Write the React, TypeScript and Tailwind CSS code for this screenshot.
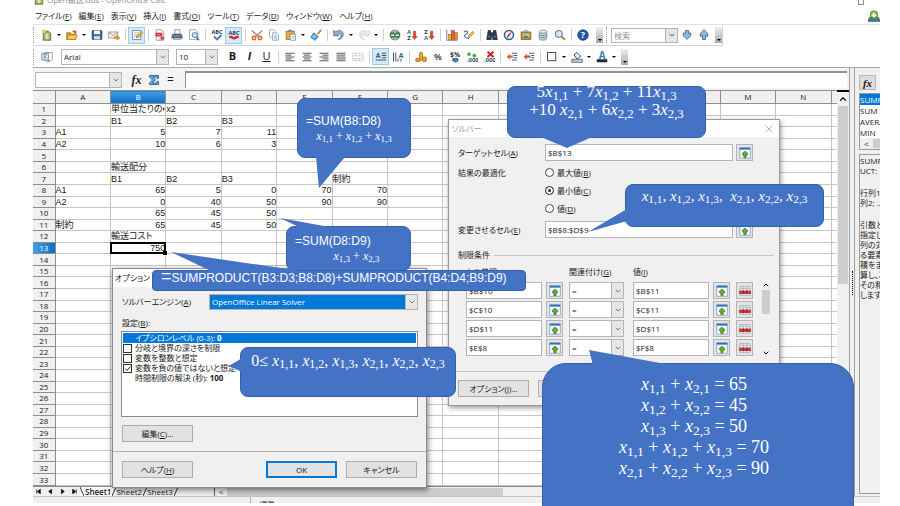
import { useState } from "react";
import type { ReactNode } from "react";
import { ChevronDown, ChevronUp, X } from "lucide-react";
import clsx from "clsx";

const icons: Record<string, ReactNode> = {
  new: (
    <>
      <path d="M3 3h7l3 3v9H3z" fill="#8fae5a" stroke="#4c6a2e" />
      <path d="M5 7h6M5 9.500h6M5 12h6M8 6v8" stroke="#fff" />
      <circle cx="4" cy="3" r="2.500" fill="#e9c93c" />
    </>
  ),
  open: (
    <>
      <path d="M1 5h5l1 2h6v7H1z" fill="#e8a32a" stroke="#a36410" />
      <path d="M4 8h11l-3 6H1z" fill="#fbcf5a" stroke="#b87716" />
      <path d="M8 4c2-3 4-3 5-1l1-1v4h-4l1-1c-1-1-2-1-3-1z" fill="#d85a1a" />
    </>
  ),
  save: (
    <>
      <rect x="1.500" y="2" width="13" height="12" rx="1" fill="#3f6796" stroke="#233f63" />
      <rect x="4" y="2" width="8" height="5" fill="#f3f6fa" />
      <rect x="4" y="9.500" width="8" height="4.500" fill="#cfdae8" />
    </>
  ),
  mail: (
    <>
      <rect x="1" y="4" width="12" height="8" fill="#f4f1e8" stroke="#8d8776" />
      <path d="M1 4l6 5 6-5" fill="none" stroke="#8d8776" />
      <path d="M9 10h3V8l4 4-4 3v-2H9z" fill="#f0a02b" stroke="#b26c0c" strokeWidth=".6" />
    </>
  ),
  edit: (
    <>
      <path d="M2 2h11v12H2z" fill="#fff" stroke="#56789c" />
      <path d="M4 5h7M4 7.500h5M4 10h4" stroke="#9cb3ca" />
      <path d="M7 12l1-3 6-6 2 2-6 6z" fill="#f5b92e" stroke="#7a5516" strokeWidth=".7" />
    </>
  ),
  pdf: (
    <>
      <path d="M3 1h7l3 3v11H3z" fill="#fff" stroke="#888" />
      <rect x="2" y="5" width="9" height="5" fill="#cf2f35" />
      <path d="M5 12h7M5 14h5M4 7.500h5" stroke="#f0b5b5" />
      <circle cx="11" cy="12" r="2.500" fill="#d9474c" />
    </>
  ),
  print: (
    <>
      <path d="M5 1h7v6H5z" fill="#fff" stroke="#6e7e90" />
      <path d="M2 7h12l1 5H1z" fill="#6d7f92" stroke="#384858" />
      <path d="M3 12h10v2H3z" fill="#d9e0e6" stroke="#4d5c6b" strokeWidth=".6" />
    </>
  ),
  preview: (
    <>
      <path d="M2 1h8l3 3v10H2z" fill="#fff" stroke="#8593a1" />
      <circle cx="9" cy="8" r="3.500" fill="#cfe3f3" stroke="#42617f" />
      <path d="M11.500 11l3 4" stroke="#42617f" strokeWidth="1.800" />
    </>
  ),
  spell: (
    <>
      <text x="8" y="7" fontSize="7.500" fontWeight="700" textAnchor="middle" fill="#27415e">ABC</text>
      <path d="M4 10l4 4 6-6" fill="none" stroke="#4b7fb8" strokeWidth="2.500" />
    </>
  ),
  autospell: (
    <>
      <text x="8" y="8" fontSize="7.500" fontWeight="700" textAnchor="middle" fill="#27415e">ABC</text>
      <path d="M2 11.500q2-2 4 0q2 2 4 0t4 0" fill="none" stroke="#d22" strokeWidth="3" />
    </>
  ),
  cut: (
    <>
      <path d="M1 2l10 9M15 2L5 11" stroke="#9a8f86" strokeWidth="2" />
      <circle cx="4" cy="12" r="2.300" fill="none" stroke="#d8651d" strokeWidth="2" />
      <circle cx="12" cy="12" r="2.300" fill="none" stroke="#d8651d" strokeWidth="2" />
    </>
  ),
  copy: (
    <>
      <path d="M2 1h6l2 2v8H2z" fill="#fff" stroke="#8a9db0" />
      <path d="M6 5h6l2 2v8H6z" fill="#eaf1f7" stroke="#8a9db0" />
      <path d="M8 9h4M8 11h4M8 13h4" stroke="#9bb2c8" />
    </>
  ),
  paste: (
    <>
      <rect x="1.500" y="3" width="11" height="11" fill="#e8a93a" stroke="#9b6613" />
      <rect x="4.500" y="1" width="5" height="3" fill="#888" />
      <path d="M7 7h7v8H7z" fill="#fff" stroke="#748fa8" />
      <path d="M9 10h4M9 12h4" stroke="#9bb2c8" />
    </>
  ),
  brush: (
    <>
      <path d="M10 6l4-5 1 1-4 5z" fill="#e9a53a" stroke="#9b6613" />
      <path d="M5 5l6 5-4 5-6-4z" fill="#62a5db" stroke="#2a5f93" />
      <path d="M3 9l3 3M5 8l3 3" stroke="#d8ecfa" />
    </>
  ),
  undo: (
    <path d="M1 2v7h7L6 7c4-2 6 0 4 4l-3 3c8-1 9-11 2-12-3 0-4 1-6 2z" fill="#8fb5dc" stroke="#365d87" />
  ),
  redo: (
    <path d="M15 2v7H8l2-2C6 5 4 7 6 11l3 3C1 13 0 3 7 2c3 0 4 1 6 2z" fill="#e9e9e9" stroke="#cccccc" />
  ),
  globe: (
    <>
      <circle cx="8" cy="8" r="6.500" fill="#5d9a48" stroke="#2b5a3a" />
      <path d="M4 4c3-2 5-2 8 0M4 12c3 2 5 2 8 0M8 1v5M8 11v4" fill="none" stroke="#c9e2c2" />
      <rect x="2" y="6.500" width="6" height="3.500" rx="1.700" fill="#dbe6ee" stroke="#24436c" />
      <rect x="8" y="6.500" width="6" height="3.500" rx="1.700" fill="#dbe6ee" stroke="#24436c" />
    </>
  ),
  sortAz: (
    <>
      <text x="4" y="7" fontSize="8" fontWeight="700" textAnchor="middle" fill="#2c62a8">A</text>
      <text x="4" y="15" fontSize="8" fontWeight="700" textAnchor="middle" fill="#333">Z</text>
      <path d="M10 3h3v7h2l-3.500 4L8 10h2z" fill="#d9482b" stroke="#96290f" strokeWidth=".6" />
    </>
  ),
  sortZa: (
    <>
      <text x="4" y="7" fontSize="8" fontWeight="700" textAnchor="middle" fill="#333">Z</text>
      <text x="4" y="15" fontSize="8" fontWeight="700" textAnchor="middle" fill="#2c62a8">A</text>
      <path d="M10 3h3v7h2l-3.500 4L8 10h2z" fill="#d9482b" stroke="#96290f" strokeWidth=".6" />
    </>
  ),
  chart: (
    <>
      <path d="M1 1v14h14" fill="none" stroke="#555" />
      <rect x="3" y="7" width="4" height="7" fill="#efb02c" stroke="#8a5a14" strokeWidth=".6" />
      <rect x="7" y="2" width="4" height="12" fill="#e2632a" stroke="#96290f" strokeWidth=".6" />
      <rect x="11" y="5" width="4" height="9" fill="#e88a2a" stroke="#96290f" strokeWidth=".6" />
    </>
  ),
  draw: (
    <>
      <path d="M1 4c5-3 7 1 3 3s-2 5 4 6" fill="none" stroke="#3975bd" strokeWidth="1.500" />
      <path d="M6 12l1-3 6-6 2 2-6 6z" fill="#f3b93b" stroke="#a86616" strokeWidth=".7" />
    </>
  ),
  find: (
    <>
      <path d="M3 2h3v3h4V2h3l2 12H9v-4H7v4H1z" fill="#2f3e4e" stroke="#1a2530" />
      <path d="M3 10h2M11 10h2" stroke="#a2b6c8" />
    </>
  ),
  compass: (
    <>
      <circle cx="8" cy="8" r="6" fill="#eef4fb" stroke="#39588b" strokeWidth="2" />
      <path d="M12 3L9 9 7 7z" fill="#d8342a" />
      <path d="M4 13l3-6 2 2z" fill="#39588b" />
    </>
  ),
  gallery: (
    <>
      <path d="M5 4l3-3 3 3" fill="none" stroke="#7a5a22" />
      <rect x="1.500" y="4" width="13" height="10" fill="#cf8f30" stroke="#8a5a14" />
      <rect x="4" y="6" width="8" height="6" fill="#9fc8e8" />
      <path d="M4 12l3-4 2 2 1-1 2 3z" fill="#4d8b3a" />
    </>
  ),
  database: (
    <>
      <path d="M3 3v10c0 2.500 10 2.500 10 0V3" fill="#c3cdd6" stroke="#6f7e8c" />
      <ellipse cx="8" cy="3.500" rx="5" ry="2" fill="#edf1f4" stroke="#6f7e8c" />
      <path d="M3 7c0 2 10 2 10 0M3 10c0 2 10 2 10 0" fill="none" stroke="#6f7e8c" />
    </>
  ),
  zoom: (
    <>
      <path d="M9.500 9.500l5 5" stroke="#c27a27" strokeWidth="2.500" />
      <circle cx="6.500" cy="6.500" r="4.500" fill="#d4e8f7" stroke="#6685a3" strokeWidth="1.500" />
    </>
  ),
  help: (
    <>
      <circle cx="8" cy="8" r="7" fill="#2457a7" stroke="#12356f" />
      <text x="8" y="12.500" fontSize="12" fontWeight="700" textAnchor="middle" fill="#fff">?</text>
    </>
  ),
  down: <path d="M6 2h4v4l3-1v4l-5 5-5-5V5l3 1z" fill="#8db9de" stroke="#2d577f" />,
  up: <path d="M6 14h4V9l3 1V6L8 1 3 6v4l3-1z" fill="#8db9de" stroke="#2d577f" />,
  update: (
    <>
      <path d="M2 10l-2 5h16l-2-5z" fill="#3c8a8a" stroke="#245" />
      <circle cx="8" cy="6" r="5" fill="#7fbf2f" stroke="#4d8417" />
      <path d="M8 3v5M5 6l3 3 3-3" fill="none" stroke="#fff" strokeWidth="1.800" />
    </>
  ),
  styles: (
    <>
      <path d="M5 2h10v9l-2 2H5z" fill="#fff" stroke="#7e8c9b" />
      <rect x="1" y="3" width="9" height="9" fill="#dbe5ef" stroke="#6c7e91" />
      <path d="M3 5h5M3 10l2-3 2 3M12 13l-4 2" fill="none" stroke="#4b6987" />
    </>
  ),
  left: <path d="M2 3h12M2 5.500h8M2 8h12M2 10.500h8M2 13h12" stroke="#555" strokeWidth="1.300" />,
  center: <path d="M2 3h12M4 5.500h8M2 8h12M4 10.500h8M2 13h12" stroke="#555" strokeWidth="1.300" />,
  right: <path d="M2 3h12M6 5.500h8M2 8h12M6 10.500h8M2 13h12" stroke="#555" strokeWidth="1.300" />,
  justify: <path d="M2 3h12M2 5.500h12M2 8h12M2 10.500h12M2 13h12" stroke="#555" strokeWidth="1.300" />,
  merge: <path d="M1 3h14v10H1zM1 6.500h14M1 10h14M5 3v3.500M10 3v3.500M5 10v3M10 10v3" fill="none" stroke="#c8c8c8" />,
  textLr: (
    <>
      <text x="4" y="9" fontSize="9" fontWeight="700" textAnchor="middle" fill="#2d5f7f">A</text>
      <path d="M9 3h6M9 6h6M9 9h6M1 12h14" stroke="#2f4356" strokeWidth="1.200" />
    </>
  ),
  textTb: (
    <>
      <path d="M2 2v12M5 2v12M8 10v4M12 10v4" stroke="#2f4356" strokeWidth="1.200" />
      <text x="12" y="9" fontSize="9" fontWeight="700" textAnchor="middle" fill="#2d5f7f">A</text>
    </>
  ),
  currency: (
    <>
      <rect x="6" y="2" width="4" height="10" rx="1" fill="#edae34" stroke="#a2690f" />
      <rect x="1" y="10" width="6" height="4" rx="1" fill="#e9a02f" stroke="#a2690f" />
      <rect x="10" y="8" width="5" height="6" rx="1" fill="#e9a02f" stroke="#a2690f" />
    </>
  ),
  percent: <text x="8" y="12" fontSize="12" fontWeight="600" textAnchor="middle" fill="#26323e">%</text>,
  standard: (
    <>
      <text x="8" y="8" fontSize="9" fontWeight="700" textAnchor="middle" fill="#26323e">$%</text>
      <path d="M5 10h7v3l-3 2-4-2z" fill="#4b7fb8" stroke="#28527c" />
    </>
  ),
  addDecimal: (
    <>
      <circle cx="4" cy="4" r="2.500" fill="#58a833" />
      <circle cx="11" cy="6" r="2.500" fill="#58a833" />
      <text x="9" y="15" fontSize="8" fontWeight="700" textAnchor="middle" fill="#28527c">.000</text>
    </>
  ),
  delDecimal: (
    <>
      <path d="M6 1l8 7M14 1L6 8" stroke="#c9281d" strokeWidth="2.800" />
      <text x="9" y="15" fontSize="8" fontWeight="700" textAnchor="middle" fill="#28527c">.000</text>
    </>
  ),
  outdent: (
    <>
      <path d="M8 3h7M10 6h5M10 9h5M8 12h7" stroke="#3e6081" strokeWidth="1.300" />
      <path d="M1 7.500l4-4v2.500h4v3H5v2.500z" fill="#e0592b" />
    </>
  ),
  indent: (
    <>
      <path d="M8 3h7M11 6h4M11 9h4M8 12h7" stroke="#3e6081" strokeWidth="1.300" />
      <path d="M1 7.500l4-4v2.500h5v3H5v2.500z" fill="#d4532a" />
    </>
  ),
  border: <rect x="2" y="2" width="11" height="11" fill="#fff" stroke="#3f4b57" strokeWidth="1.300" />,
  fill: (
    <>
      <path d="M1 11h14v4H1z" fill="#c3cdd6" stroke="#38556f" />
      <path d="M4 5l4-3 5 5-5 4z" fill="#e8eef3" stroke="#38556f" strokeWidth="1.300" />
    </>
  ),
  fontColor: (
    <>
      <path d="M1 11h14v4H1z" fill="#1f2a35" />
      <text x="8" y="11" fontSize="13" fontWeight="700" textAnchor="middle" fill="#3f79b0">A</text>
    </>
  ),
  sigma: <path d="M2 2h12v4h-2l-1-2H7l3 4-4 4h5l1-2h2v4H2v-2l4-4-4-4z" fill="#6aa7d8" stroke="#1d4f80" />,
  shrink: (
    <>
      <rect x="1" y="1" width="14" height="14" fill="#f6fafd" stroke="#7a9cc0" />
      <path d="M1 1h14v2.500H1z" fill="#2f6fbd" />
      <path d="M8 5.500l4 3.500-1.500 2H9.500v3h-3v-3h-1L4 9z" fill="#67ac32" stroke="#3b7515" />
    </>
  ),
  removeRow: (
    <>
      <path d="M1 2h14v12H1zM1 4.500h14M5.500 2v12M10.500 2v12" fill="#e6ebf0" stroke="#a5b1bd" />
      <path d="M0 7.500h16v4.500H0z" fill="#c8383c" />
      <path d="M5.500 7v5M10.500 7v5" stroke="#8c1216" />
    </>
  ),
};

const Icon = ({ name }: { name: string }) => (
  <svg viewBox="0 0 16 16" fill="none" className="size-3 shrink-0">
    {icons[name]}
  </svg>
);

// "|" is a separator, "v" a drop-down arrow, "*" marks a pressed button
const standardBar = [
  "new", "v", "open", "v", "save", "mail", "|", "*edit", "|", "pdf", "print", "preview", "|",
  "spell", "*autospell", "|", "cut", "copy", "paste", "v", "brush", "|", "undo", "v", "redo", "v", "|",
  "globe", "sortAz", "sortZa", "|", "chart", "draw", "|", "find", "compass", "gallery", "database", "zoom", "|", "help",
];
const formatBar = [
  "|", "left", "center", "right", "justify", "merge", "|", "*textLr", "textTb", "|",
  "currency", "percent", "standard", "addDecimal", "delDecimal", "|", "outdent", "indent", "|",
  "border", "v", "fill", "v", "fontColor", "v",
];

const ToolItems = ({ items }: { items: string[] }) => (
  <>
    {items.map((item, i) => {
      if (item === "|") {
        return (
          <span key={i} className="w-[6px] shrink-0 flex justify-center">
            <span className="w-px h-3 bg-[#cfcfcf]" />
          </span>
        );
      }
      if (item === "v") {
        return (
          <button key={i} type="button" aria-label="メニュー" className="w-2 shrink-0 flex justify-center">
            <span className="border-x-2 border-x-transparent border-t-2 border-t-black" />
          </button>
        );
      }
      const pressed = item.startsWith("*");
      const name = item.replace("*", "");
      return (
        <button
          key={i}
          type="button"
          aria-label={name}
          className={clsx(
            "w-[17px] h-[17px] shrink-0 flex items-center justify-center",
            pressed && "bg-[#d5e9f9] border border-[#9fcbee]",
          )}
        >
          <Icon name={name} />
        </button>
      );
    })}
  </>
);

const Handle = () => <span className="w-[5px] h-4 shrink-0 border-l border-dotted border-[#999]" />;

const Overflow = () => (
  <button
    type="button"
    aria-label="その他"
    className="w-[7px] h-4 shrink-0 flex items-end justify-center pb-[2px] bg-gradient-to-b from-[#f0f0f0] to-[#a8a8a8]"
  >
    <span className="border-x-2 border-x-transparent border-t-2 border-t-black" />
  </button>
);

const Select = ({ label, value, className, blue }: { label: string; value: string; className?: string; blue?: boolean }) => (
  <div className={clsx("relative flex border border-[#b4b4b4] bg-white", className)}>
    <select
      aria-label={label}
      className={clsx("appearance-none w-full pl-[2px] outline-none", blue ? "bg-[#0078d7] text-white" : "bg-white")}
    >
      <option>{value}</option>
    </select>
    <span className="absolute right-0 inset-y-0 w-3 flex items-center justify-center bg-[#e6e6e6] border-l border-[#b4b4b4] pointer-events-none">
      <ChevronDown className="size-2 text-[#444]" />
    </span>
  </div>
);

// "ファイル(F)" with the access key underlined
const Label = ({ text }: { text: string }) => {
  const [before, key, after] = text.split(/\(([A-Z])\)/);
  return (
    <span>
      {before}
      {key && <>(<u>{key}</u>)</>}
      {after}
    </span>
  );
};

const PushButton = ({ text, primary, onClick }: { text: string; primary?: boolean; onClick?: () => void }) => (
  <button
    type="button"
    onClick={onClick}
    className={clsx(
      "w-[71px] h-[17px] shrink-0 bg-[#e2e2e2] flex items-center justify-center whitespace-nowrap border",
      primary ? "border-[#0078d7] ring-1 ring-inset ring-[#0078d7]" : "border-[#adadad]",
    )}
  >
    <Label text={text} />
  </button>
);

const IconButton = ({ name, label }: { name: string; label: string }) => (
  <button
    type="button"
    aria-label={label}
    className="w-[17px] h-[17px] shrink-0 flex items-center justify-center bg-[#e4e4e4] border border-[#b4b4b4]"
  >
    <Icon name={name} />
  </button>
);

const columns = "ABCDEFGHIJKLMN".split("");
const sheet: Record<number, Record<string, string | number>> = {
  1: { B: "単位当たりの", C: "x2" },
  2: { B: "B1", C: "B2", D: "B3" },
  3: { A: "A1", B: 5, C: 7, D: 11 },
  4: { A: "A2", B: 10, C: 6, D: 3 },
  6: { B: "輸送配分" },
  7: { B: "B1", C: "B2", D: "B3", F: "制約" },
  8: { A: "A1", B: 65, C: 5, D: 0, E: 70, F: 70 },
  9: { A: "A2", B: 0, C: 40, D: 50, E: 90, F: 90 },
  10: { B: 65, C: 45, D: 50 },
  11: { A: "制約", B: 65, C: 45, D: 50 },
  12: { B: "輸送コスト" },
  13: { B: 750 },
};

const Sheet = () => (
  <table className="w-full h-full table-fixed border-collapse text-[9px] leading-[10px]">
    <colgroup>
      <col className="w-[22px]" />
      {columns.map((c) => (
        <col key={c} />
      ))}
      <col className="w-[6px]" />
    </colgroup>
    <thead>
      <tr className="h-[13px] text-[8px] font-['Open_Sans',sans-serif]">
        <th className="border border-[#8e8e8e] border-l-0 bg-[#f0f0f0] p-0" />
        {columns.map((c) => (
          <th
            key={c}
            className={clsx(
              "border border-[#8e8e8e] p-0 font-normal",
              c === "B" ? "bg-gradient-to-b from-[#3d9fe8] to-[#0b6fc4] text-white" : "bg-[#f0f0f0]",
            )}
          >
            {c}
          </th>
        ))}
        <th className="border border-r-0 border-[#8e8e8e] bg-[#f0f0f0] p-0" />
      </tr>
    </thead>
    <tbody>
      {Array.from({ length: 33 }, (_, i) => i + 1).map((row) => (
        <tr key={row}>
          <th
            className={clsx(
              "border border-l-0 border-[#8e8e8e] p-0 text-[8px] font-normal font-['Open_Sans',sans-serif]",
              row === 13 ? "bg-gradient-to-r from-[#3d9fe8] to-[#0b6fc4] text-white" : "bg-[#f0f0f0]",
            )}
          >
            {row}
          </th>
          {columns.map((c) => {
            const value = sheet[row]?.[c];
            const active = row === 13 && c === "B";
            return (
              <td
                key={c}
                className={clsx(
                  "relative border border-[#c6c6c6] p-0 whitespace-nowrap",
                  typeof value === "number" ? "text-right" : "text-left",
                )}
              >
                {value}
                {row === 1 && c === "B" && (
                  <span className="absolute right-0 top-[3px] border-y-2 border-y-transparent border-l-2 border-l-[#b02020]" />
                )}
                {active && (
                  <span className="absolute -inset-px border-2 border-black">
                    <span className="absolute -right-[3px] -bottom-[3px] size-1 bg-black" />
                  </span>
                )}
              </td>
            );
          })}
          <td className="border border-r-0 border-[#c6c6c6] p-0" />
        </tr>
      ))}
    </tbody>
  </table>
);

const menus = ["ファイル(F)", "編集(E)", "表示(V)", "挿入(I)", "書式(O)", "ツール(T)", "データ(D)", "ウィンドウ(W)", "ヘルプ(H)"];

const FunctionPanel = () => (
  <aside className="w-[26px] shrink-0 bg-[#f0f0f0] border-l border-[#a0a0a0] pl-1 pt-[7px] flex flex-col overflow-hidden whitespace-nowrap">
    <button type="button" aria-label="関数" className="w-[17px] h-[15px] bg-[#dcdcdc] border border-[#b8b8b8] font-['Liberation_Serif',serif] italic font-bold text-[11px] leading-[12px]">
      fx
    </button>
    <ul className="mt-[3px] bg-white border border-r-0 border-[#999] leading-[11px]">
      <li className="bg-[#0078d7] text-white">SUMPRODUCT</li>
      <li>SUM</li>
      <li>AVERAGE</li>
      <li>MIN</li>
      <li className="flex items-center gap-1 bg-[#f0f0f0] pl-1">
        &lt; <span className="w-3 h-[9px] bg-[#cdcdcd]" />
      </li>
    </ul>
    <div className="mt-1 mb-[2px] grow border border-r-0 border-[#999] leading-[10px] flex flex-col gap-3 pt-px">
      <p>SUMPROD<br />UCT:</p>
      <p>行列1;行<br />列2; ...</p>
      <p>引数として<br />指定した配<br />列の対応す<br />る要素間の<br />積をまず計<br />算し、次に<br />その和を返<br />します。</p>
    </div>
  </aside>
);

const constraints = [
  ["$B$10", "$B$11"],
  ["$C$10", "$C$11"],
  ["$D$11", "$D$11"],
  ["$E$8", "$F$8"],
];

const SolverDialog = () => {
  const [goal, setGoal] = useState("最小値(C)");
  return (
    <section className="absolute left-[448px] top-[119px] w-[332px] bg-[#f0f0f0] border border-[#9a9a9a] shadow-[1px_2px_5px_rgba(0,0,0,0.4)]">
      <header className="h-[17px] bg-white text-[#9a9a9a] pl-[3px] pr-[4px] flex items-center justify-between">
        ソルバー
        <button type="button" aria-label="閉じる">
          <X className="size-3" strokeWidth={1.5} />
        </button>
      </header>
      <div className="px-[9px] pt-[7px]">
        <div className="grid grid-cols-[87px_188px_20px] gap-y-[6px] items-center">
          <label htmlFor="target"><Label text="ターゲットセル(A)" /></label>
          <input id="target" defaultValue="$B$13" className="h-[17px] min-w-0 bg-white border border-[#b4b4b4] px-[2px]" />
          <div className="pl-[3px]"><IconButton name="shrink" label="縮小" /></div>
          <span className="self-start leading-[11px]">結果の最適化</span>
          <fieldset className="col-span-2 flex flex-col gap-[7px] pb-px">
            {["最大値(B)", "最小値(C)", "値(D)"].map((g) => (
              <label key={g} className="flex items-center gap-[3px] h-[11px]">
                <input
                  type="radio"
                  name="goal"
                  checked={goal === g}
                  onChange={() => setGoal(g)}
                  className="appearance-none size-[9px] rounded-full border border-[#444] bg-white checked:bg-[#222] checked:ring-2 checked:ring-inset checked:ring-white"
                />
                <Label text={g} />
              </label>
            ))}
          </fieldset>
          <label htmlFor="cells"><Label text="変更させるセル(E)" /></label>
          <input id="cells" defaultValue="$B$8:$D$9" className="h-[17px] min-w-0 bg-white border border-[#b4b4b4] px-[2px]" />
          <div className="pl-[3px]"><IconButton name="shrink" label="縮小" /></div>
        </div>
        <div className="mt-[11px] -mr-1 flex items-center gap-1 leading-[12px]">
          制限条件
          <span className="h-px grow bg-[#c4c4c4]" />
        </div>
        <div className="mt-[5px] pl-2 flex gap-[9px]">
          <table className="border-separate border-spacing-0 leading-[12px]">
            <thead>
              <tr className="h-[15px] align-top">
                <th className="p-0 text-left font-normal"><Label text="セル参照(C)" /></th>
                <th />
                <th className="p-0 text-left font-normal"><Label text="関連付け(G)" /></th>
                <th className="p-0 text-left font-normal"><Label text="値(I)" /></th>
                <th />
                <th />
              </tr>
            </thead>
            <tbody>
              {constraints.map(([ref, value]) => (
                <tr key={ref} className="h-[19px]">
                  <td className="p-0 pr-1">
                    <input aria-label="セル参照" defaultValue={ref} className="block w-[76px] h-[17px] bg-white border border-[#b4b4b4] px-[2px]" />
                  </td>
                  <td className="p-0 pr-[6px]"><IconButton name="shrink" label="縮小" /></td>
                  <td className="p-0 pr-[9px]"><Select label="関連付け" value="=" className="w-[55px] h-[17px]" /></td>
                  <td className="p-0 pr-1">
                    <input aria-label="値" defaultValue={value} className="block w-[76px] h-[17px] bg-white border border-[#b4b4b4] px-[2px]" />
                  </td>
                  <td className="p-0 pr-[6px]"><IconButton name="shrink" label="縮小" /></td>
                  <td className="p-0"><IconButton name="removeRow" label="削除" /></td>
                </tr>
              ))}
            </tbody>
          </table>
          <div className="w-[10px] mt-[14px] flex flex-col items-center text-black">
            <ChevronUp className="size-2 my-[1px]" strokeWidth={3} />
            <span className="w-full h-6 bg-[#cdcdcd]" />
            <ChevronDown className="size-2 mt-auto" strokeWidth={3} />
          </div>
        </div>
      </div>
      <footer className="mt-[14px] border-t border-[#c4c4c4] px-[9px] pt-2 pb-2 flex gap-[9px]">
        <PushButton text="オプション(J)..." />
        <PushButton text="ヘルプ(H)" />
      </footer>
    </section>
  );
};

const options = [
  { text: "分岐と境界の深さを制限", on: false },
  { text: "変数を整数と想定", on: false },
  { text: "変数を負の値ではないと想定", on: true },
];

const OptionsDialog = () => (
  <section className="absolute left-[112px] top-[268px] w-[315px] bg-[#f0f0f0] border border-[#8a8a8a] shadow-[1px_2px_6px_rgba(0,0,0,0.5)]">
    <header className="h-[18px] bg-white pl-[2px] flex items-center">オプション</header>
    <div className="px-[8px] pt-[7px]">
      <div className="flex items-center justify-between pl-px">
        <Label text="ソルバーエンジン(A)" />
        <Select label="ソルバーエンジン" value="OpenOffice Linear Solver" className="w-[209px] h-4" blue />
      </div>
      <p className="mt-[7px] pl-px leading-[12px]"><Label text="設定(B):" /></p>
      <div className="mt-[2px] h-[86px] bg-white border border-[#8a8a8a] leading-[10px] p-px">
        <p className="bg-[#0078d7] text-white pl-3">イプシロンレベル (0-3): <b>0</b></p>
        {options.map((o) => (
          <label key={o.text} className="flex items-center gap-[3px]">
            <span className="relative flex">
              <input
                type="checkbox"
                defaultChecked={o.on}
                className="peer appearance-none size-[9px] border border-[#333] bg-white"
              />
              <svg viewBox="0 0 9 9" className="absolute inset-0 size-[9px] hidden peer-checked:block pointer-events-none">
                <path d="M2 4.500l2 2L7.500 2.500" fill="none" stroke="#222" />
              </svg>
            </span>
            {o.text}
          </label>
        ))}
        <p className="pl-3">時間制限の解決 (秒): <b>100</b></p>
      </div>
      <div className="mt-2 pl-px"><PushButton text="編集(C)..." /></div>
    </div>
    <footer className="mt-[9px] border-t border-[#b0b0b0] px-[9px] py-[9px] flex items-center gap-[9px]">
      <PushButton text="ヘルプ(H)" />
      <span className="grow" />
      <PushButton text="OK" primary />
      <PushButton text="キャンセル" />
    </footer>
  </section>
);

// every "x1,2" becomes an italic x with its subscript
const Formula = ({ text }: { text: string }) => (
  <p className="font-['Liberation_Serif',serif] whitespace-pre">
    {text.split(/x(\d,\d)/).map((part, i) =>
      i % 2 ? (
        <span key={i}>
          <i>x</i>
          <sub className="text-[0.75em] bottom-[-0.2em]">{part}</sub>
        </span>
      ) : (
        part
      ),
    )}
  </p>
);

const Callout = ({ className, tail, children }: { className: string; tail: string; children: ReactNode }) => (
  <div className={clsx("absolute bg-[#4472c4] border border-[#3560ac] text-white", className)}>
    <svg className="absolute left-0 top-0 size-px overflow-visible">
      <path d={tail} fill="#4472c4" />
    </svg>
    <div className="relative">{children}</div>
  </div>
);

const App = () => (
  <div className="relative h-screen overflow-hidden bg-white pl-[33px] pr-5 pb-[3px] text-[8px] text-[#1a1a1a] font-['Open_Sans','Noto_Sans_CJK_JP',sans-serif] [font-feature-settings:'palt']">
    <main className="h-full flex flex-col">
      <header className="h-2 shrink-0 overflow-hidden flex items-end gap-[2px] pb-[3px] text-[#8a8a8a]">
        <Icon name="new" />
        <h1 className="leading-[10px]">Open輸送.ods - OpenOffice Calc</h1>
        <span className="ml-auto mr-4 size-[6px] border border-[#888]" />
      </header>
      <nav className="h-[17px] shrink-0 border-b border-[#e2e2e2] pl-[2px] flex items-center gap-[7px]">
        {menus.map((m) => (
          <button key={m} type="button" className="whitespace-nowrap">
            <Label text={m} />
          </button>
        ))}
        <span className="ml-auto"><Icon name="update" /></span>
      </nav>
      <div className="h-[21px] shrink-0 flex">
        <div className="flex items-center border-b border-r border-[#d4d4d4]">
          <Handle />
          <ToolItems items={standardBar} />
          <span className="w-[5px]" />
          <Overflow />
          <span className="w-[3px]" />
          <Handle />
          <input aria-label="検索" placeholder="検索" className="w-[55px] h-[15px] border border-[#b4b4b4] px-[2px]" />
          <span className="w-3 h-[15px] flex items-center justify-center bg-[#e6e6e6] border border-l-0 border-[#b4b4b4]">
            <ChevronDown className="size-2" />
          </span>
          <ToolItems items={["down", "up"]} />
          <span className="w-[3px]" />
          <Overflow />
        </div>
      </div>
      <div className="h-[21px] shrink-0 flex items-center">
        <Handle />
        <ToolItems items={["styles"]} />
        <Select label="フォント名" value="Arial" className="ml-[6px] w-[108px] h-4" />
        <Select label="フォントサイズ" value="10" className="ml-[7px] mr-[6px] w-[42px] h-4" />
        <button type="button" className="w-[17px] text-[11px] font-bold">B</button>
        <button type="button" className="w-[17px] text-[11px] font-bold italic">I</button>
        <button type="button" className="w-[17px] text-[11px] underline">U</button>
        <ToolItems items={formatBar} />
        <span className="w-[3px]" />
        <Overflow />
      </div>

      <div className="grow min-h-0 flex border-t border-[#a8a8a8]">
        <div className="grow min-w-0 flex flex-col">
          <div className="h-[22px] shrink-0 bg-[#f4f4f4] pl-[2px] pr-[2px] pt-[3px] pb-[2px] flex items-center">
            <Select label="名前ボックス" value="" className="w-[87px] h-4" />
            <button type="button" aria-label="関数ウィザード" className="ml-[6px] w-[17px] font-['Liberation_Serif',serif] italic font-bold text-[12px] leading-[14px]">
              fx
            </button>
            <ToolItems items={["sigma"]} />
            <span className="w-[17px] text-center text-[12px] leading-[14px]">=</span>
            <input aria-label="数式" className="ml-[6px] grow min-w-0 h-full bg-white border-t-2 border-l border-[#8d9590]" />
          </div>
          <div className="grow min-h-0 flex overflow-hidden">
            <div className="grow min-w-0 font-['Liberation_Sans','Noto_Sans_CJK_JP',sans-serif]">
              <Sheet />
            </div>
            <div className="w-3 shrink-0 bg-[#f0f0f0] border-t-2 border-black flex flex-col items-center">
              <ChevronUp className="size-[10px] my-[2px]" strokeWidth={3} />
              <span className="w-[10px] h-[178px] bg-[#cdcdcd]" />
            </div>
          </div>
          <div className="h-[10px] shrink-0 flex bg-[#f0f0f0] leading-[9px] border-t border-[#888]">
            <div className="flex items-center gap-[7px] pl-[3px] text-black w-[47px]">
              {["M1 1v6M6 1v6L2 4z", "M5 1v6L1 4z", "M2 1v6l4-3z", "M1 1v6l4-3zM6 1v6"].map((d) => (
                <svg key={d} viewBox="0 0 7 8" className="w-[5px] h-[7px]">
                  <path d={d} fill="currentColor" stroke="currentColor" />
                </svg>
              ))}
            </div>
            {["Sheet1", "Sheet2", "Sheet3"].map((s, i) => (
              <button key={s} type="button" className={clsx("flex items-center gap-px", i === 0 && "font-semibold bg-white")}>
                {i === 0 && (
                  <svg viewBox="0 0 4 9" className="w-1 h-[9px]"><path d="M0 0l4 9" stroke="#333" /></svg>
                )}
                {s}
                <svg viewBox="0 0 4 9" className="w-1 h-[9px]"><path d="M4 0L0 9" stroke="#333" /></svg>
              </button>
            ))}
            <div className="ml-9 grow flex items-center gap-1 border-l border-[#666] pl-1">
              &lt;
              <span className="w-[276px] h-2 bg-[#cdcdcd]" />
            </div>
          </div>
        </div>
        <div className="w-[5px] shrink-0 border-l border-[#a0a0a0] bg-[#f0f0f0] flex justify-center pt-[203px]">
          <span className="h-6 border-l border-dotted border-black" />
        </div>
        <FunctionPanel />
      </div>
      <footer className="h-[7px] shrink-0 overflow-hidden bg-[#f0f0f0] border-t border-[#c4c4c4] flex pl-[217px]">
        <span className="pl-2 border-l border-[#aaa] leading-[16px]">標準</span>
        <span className="ml-auto pr-5 leading-[16px]">合計=750</span>
      </footer>
    </main>

    <SolverDialog />
    <OptionsDialog />

    <div className="font-['Liberation_Sans',sans-serif] text-[12px]">
      <Callout className="left-[297px] top-[98px] w-[114px] h-[60px] rounded-lg px-2 py-[15px]" tail="M18 58L21 89L47 58z">
        <p className="leading-[15px]">=SUM(B8:D8)</p>
        <div className="text-center text-[12px] leading-[15px]"><Formula text="x1,1 + x1,2 + x1,3" /></div>
      </Callout>
      <Callout className="left-[286px] top-[226px] w-[125px] h-[45px] rounded-lg px-2 py-[7px]" tail="M14 1L-7 -9L48 1z">
        <p className="leading-[15px]">=SUM(D8:D9)</p>
        <div className="pl-4 text-center text-[12px] leading-[15px]"><Formula text="x1,3 + x2,3" /></div>
      </Callout>
      <Callout className="left-[152px] top-[270px] w-[374px] h-[21px] rounded px-2" tail="M60 1L18 -19L155 1z">
        <p className="leading-[10px] whitespace-nowrap">
          <span className="text-[18px]">=</span>SUMPRODUCT(B3:D3;B8:D8)+SUMPRODUCT(B4:D4;B9:D9)
        </p>
      </Callout>
      <Callout className="left-[507px] top-[86px] w-[199px] h-[52px] rounded-lg text-center text-[17px] leading-[18px]" tail="M33 50L59 61L84 50z">
        <div className="-mt-1">
          <Formula text="5x1,1 + 7x1,2 + 11x1,3" />
          <Formula text="+10 x2,1 + 6x2,2 + 3x2,3" />
        </div>
      </Callout>
      <Callout className="left-[625px] top-[184px] w-[199px] h-[43px] rounded-lg text-center text-[15px] leading-[22px]" tail="M1 24L-38 47L1 36z">
        <Formula text="x1,1, x1,2, x1,3,  x2,1, x2,2, x2,3" />
      </Callout>
      <Callout className="left-[240px] top-[347px] w-[216px] h-[50px] rounded-lg text-center text-[16px] leading-[26px]" tail="M1 10L-12 18L1 24z">
        <Formula text="0≤ x1,1, x1,2, x1,3, x2,1, x2,2, x2,3" />
      </Callout>
      <Callout className="left-[542px] top-[363px] w-[312px] h-[160px] rounded-t-3xl pt-[10px] pr-2 text-center text-[18px] leading-[21px]" tail="M50 1L46 -14L128 1z">
        <Formula text="x1,1 + x2,1 = 65" />
        <Formula text="x1,2 + x2,2 = 45" />
        <Formula text="x1,3 + x2,3 = 50" />
        <Formula text="x1,1 + x1,2 + x1,3 = 70" />
        <Formula text="x2,1 + x2,2 + x2,3 = 90" />
      </Callout>
    </div>
  </div>
);

export default App;
